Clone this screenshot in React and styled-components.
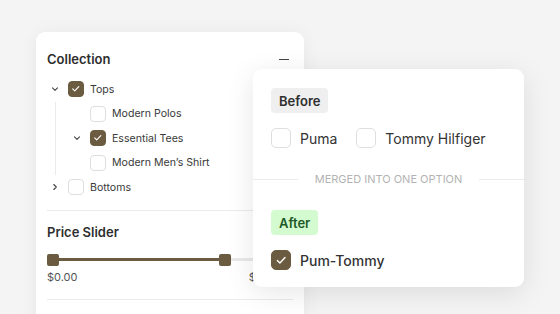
import styled, { createGlobalStyle } from 'styled-components';

const GlobalStyle = createGlobalStyle`
  html, body {
    margin: 0;
    padding: 0;
    background: #f4f4f4;
  }
  body {
    font-family: Inter, "Noto Sans", sans-serif;
    color: #333;
  }
`;

const colors = {
  brand: '#6b5b40',
  border: '#dedede',
  line: '#ebebeb',
  text: '#3a3a3a',
};

const Stage = styled.div`
  position: relative;
  width: 560px;
  height: 314px;
  overflow: hidden;
  background: #f4f4f4;
`;

const FilterCard = styled.div`
  margin: 32px 0 0 36px;
  width: 268px;
  height: 300px;
  box-sizing: border-box;
  padding: 18px 11px 0 11px;
  background: #fff;
  border-radius: 9px;
  box-shadow: 0 2px 18px rgba(0, 0, 0, 0.06);
`;

const SectionHead = styled.div`
  display: flex;
  align-items: center;
  justify-content: space-between;
  height: 18px;
  font-size: 13px;
  font-weight: 600;
  color: #2e2e2e;
`;

const Minus = styled.span`
  width: 10px;
  height: 1px;
  background: #444;
  margin-right: 4px;
`;

const Tree = styled.div`
  margin-top: 9px;
`;

const TreeRow = styled.div`
  display: flex;
  align-items: center;
  height: 24.5px;
  font-size: 10.6px;
  color: ${colors.text};
`;

const Caret = styled.span`
  width: 16px;
  height: 16px;
  display: flex;
  align-items: center;
  justify-content: center;
  margin-right: 5px;
  color: #555;
`;

const Children = styled.div`
  margin-left: 8px;
  padding-left: 13px;
  border-left: 1px solid ${colors.line};
`;

const Leaf = styled.div`
  padding-left: 21px;
`;

const Box = styled.span`
  box-sizing: border-box;
  width: ${(p) => p.size}px;
  height: ${(p) => p.size}px;
  flex: none;
  border-radius: ${(p) => (p.size > 18 ? 5 : 4)}px;
  border: 1px solid ${(p) => (p.checked ? colors.brand : colors.border)};
  background: ${(p) => (p.checked ? colors.brand : '#fff')};
  display: flex;
  align-items: center;
  justify-content: center;
  margin-right: ${(p) => (p.size > 18 ? 9 : 6)}px;
`;

const Divider = styled.div`
  height: 1px;
  background: ${colors.line};
  margin: ${(p) => p.margin};
`;

const Slider = styled.div`
  display: flex;
  align-items: center;
  height: 12px;
  margin-top: 13px;
`;

const Track = styled.div`
  height: 3px;
  flex: ${(p) => p.grow};
  background: ${(p) => (p.filled ? colors.brand : '#e9e9e9')};
`;

const Handle = styled.span`
  width: 12px;
  height: 12px;
  border-radius: 2px;
  background: ${colors.brand};
  flex: none;
`;

const SliderLabels = styled.div`
  display: flex;
  justify-content: space-between;
  margin-top: 4px;
  font-size: 11px;
  color: #555;
`;

const MergeCard = styled.div`
  position: absolute;
  left: 253px;
  top: 69px;
  width: 271px;
  height: 218px;
  box-sizing: border-box;
  padding: 19px 18px 0 18px;
  background: #fff;
  border-radius: 9px;
  box-shadow: 0 6px 28px rgba(0, 0, 0, 0.1);
`;

const Badge = styled.span`
  display: inline-flex;
  align-items: center;
  height: 25px;
  padding: 0 8px;
  border-radius: 4px;
  font-size: 13px;
  font-weight: 600;
  background: ${(p) => (p.tone === 'green' ? '#d3fbcf' : '#efefef')};
  color: ${(p) => (p.tone === 'green' ? '#1d5a27' : '#2e2e2e')};
`;

const OptionRow = styled.div`
  display: flex;
  align-items: center;
  margin-top: 15px;
`;

const Option = styled.label`
  display: flex;
  align-items: center;
  font-size: 14px;
  font-weight: ${(p) => (p.bold ? 500 : 400)};
  color: #333;
  margin-right: 19px;
`;

const Separator = styled.div`
  display: flex;
  align-items: center;
  margin: 24px -18px 24px -18px;
  font-size: 11px;
  color: #b3b3b3;
  white-space: nowrap;
  & > span {
    padding: 0 17px;
  }
  &::before,
  &::after {
    content: '';
    flex: 1;
    height: 1px;
    background: ${colors.line};
  }
`;

function Check({ size }) {
  return (
    <svg width={size} height={size} viewBox="0 0 12 12" fill="none">
      <path d="M2.8 6.2l2.1 2.1 4.3-4.6" stroke="#fff" strokeWidth="1.2" strokeLinecap="round" strokeLinejoin="round" />
    </svg>
  );
}

function Chevron({ open }) {
  return (
    <svg width="8" height="8" viewBox="0 0 8 8" fill="none">
      <path
        d={open ? 'M1.5 2.8L4 5.3l2.5-2.5' : 'M2.8 1.5L5.3 4 2.8 6.5'}
        stroke="#444"
        strokeWidth="1.1"
        strokeLinecap="round"
        strokeLinejoin="round"
      />
    </svg>
  );
}

function Checkbox({ checked, size = 16 }) {
  return (
    <Box checked={checked} size={size}>
      {checked && <Check size={size * 0.72} />}
    </Box>
  );
}

function Node({ label, checked, caret }) {
  return (
    <TreeRow>
      {caret !== undefined ? (
        <Caret>
          <Chevron open={caret === 'open'} />
        </Caret>
      ) : null}
      <Checkbox checked={checked} />
      {label}
    </TreeRow>
  );
}

export default function App() {
  return (
    <Stage>
      <GlobalStyle />
      <FilterCard>
        <SectionHead>
          Collection
          <Minus />
        </SectionHead>
        <Tree>
          <Node label="Tops" checked caret="open" />
          <Children>
            <Leaf>
              <Node label="Modern Polos" />
            </Leaf>
            <Node label="Essential Tees" checked caret="open" />
            <Leaf>
              <Node label="Modern Men’s Shirt" />
            </Leaf>
          </Children>
          <Node label="Bottoms" caret="closed" />
        </Tree>
        <Divider margin="10px 0 12px 0" />
        <SectionHead>Price Slider</SectionHead>
        <Slider>
          <Handle />
          <Track filled grow="160" />
          <Handle />
          <Track grow="62" />
        </Slider>
        <SliderLabels>
          <span>$0.00</span>
          <span>$200.00</span>
        </SliderLabels>
        <Divider margin="15px 0 0 0" />
      </FilterCard>

      <MergeCard>
        <Badge>Before</Badge>
        <OptionRow>
          <Option>
            <Checkbox size={20} />
            Puma
          </Option>
          <Option>
            <Checkbox size={20} />
            Tommy Hilfiger
          </Option>
        </OptionRow>
        <Separator>
          <span>MERGED INTO ONE OPTION</span>
        </Separator>
        <Badge tone="green">After</Badge>
        <OptionRow>
          <Option bold>
            <Checkbox checked size={20} />
            Pum-Tommy
          </Option>
        </OptionRow>
      </MergeCard>
    </Stage>
  );
}
